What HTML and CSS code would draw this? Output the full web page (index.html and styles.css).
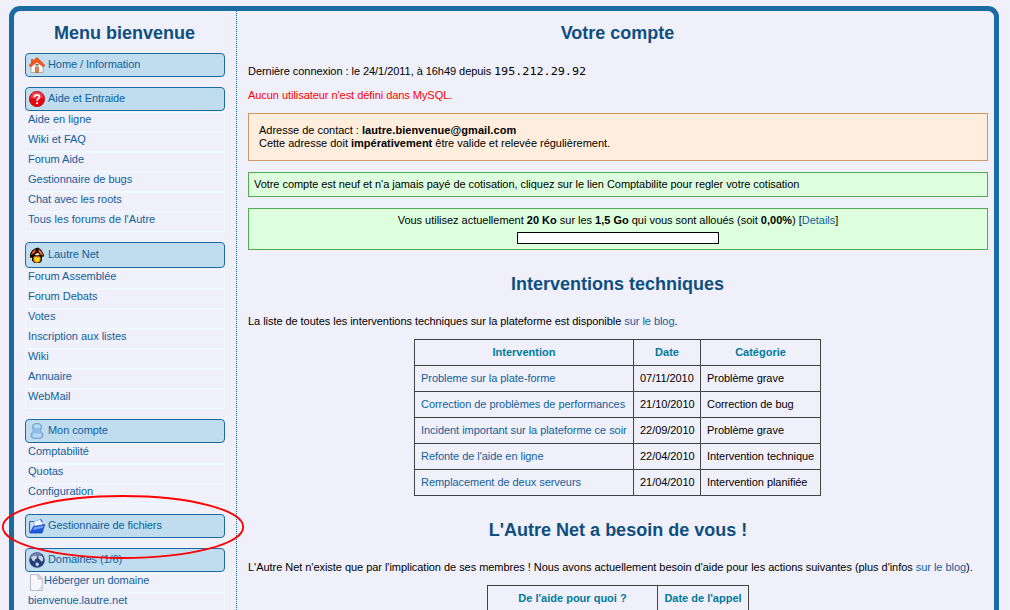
FILE: index.html
```html
<!DOCTYPE html>
<html lang="fr">
<head>
<meta charset="utf-8">
<title>Votre compte</title>
<link rel="stylesheet" href="styles.css">
</head>
<body>
<div class="frame">
  <nav class="menu">
    <h2>Menu bienvenue</h2>
    <section class="group">
      <a class="head"><svg class="icon" viewBox="0 0 16 16"><path d="M2 8v7.500h12V8L8 3z" fill="#faf6f4" stroke="#b39a8e" stroke-width=".8"/><path d="M2 2h2.500v4H2z" fill="#d06a3c"/><path d="M8 .2L0 8.200l1.500 1.900L8 5.200l6.500 4.900L16 8.200z" fill="#f0561a" stroke="#c8400f" stroke-width=".4"/><path d="M6.500 10h3v5.500h-3z" fill="#dd8a4a" stroke="#9a5a35" stroke-width=".6"/><path d="M6.500 7.300h3v1.200h-3z" fill="#444"/></svg>Home / Information</a>
    </section>
    <section class="group">
      <a class="head"><svg class="icon" viewBox="0 0 16 16"><circle cx="8" cy="8" r="7.700" fill="#e8060f" stroke="#a4000a" stroke-width=".6"/><path d="M1.500 6.500A6.600 6.600 0 0 1 14.500 6.500Q8 9 1.500 6.500" fill="#f4606a" opacity=".6"/><path d="M5.400 6.200Q5.500 3.900 8 3.900T10.500 6.100Q10.500 7.200 9 8.100Q8.100 8.700 8.100 9.900" fill="none" stroke="#fff" stroke-width="1.700"/><path d="M7.200 11.200H9V13H7.200z" fill="#fff"/></svg>Aide et Entraide</a>
      <ul><li>Aide en ligne</li><li>Wiki et FAQ</li><li>Forum Aide</li><li>Gestionnaire de bugs</li><li>Chat avec les roots</li><li class="wide">Tous les forums de l'Autre</li></ul>
    </section>
    <section class="group">
      <a class="head tall"><svg class="icon" viewBox="0 0 16 18"><path d="M6 2.500L9 1.500l3.500 2.500 2.500 5-.5 2-1.500-.5v4L11 17H5.500L3 14.500V11.500L1 12V8l2-3.500z" fill="#120a05"/><path d="M2 9L3.500 5.500 7 3 6 6.500 4 8z" fill="#ee5f1c"/><path d="M9.500 3l3 2.500 1.500 4-2.300-.5L9.500 6z" fill="#f4632a"/><path d="M7 7.200h2.500L11 9H5.500z" fill="#fff2e0"/><circle cx="8" cy="13" r="3.700" fill="#fb8a14"/><path d="M5 12l3-1 3 1.500-1.500 3H6.500z" fill="#ffdc22"/><path d="M8.500 2L6.500 8 3 10.500M9.500 6l2.500 4M3 10h9" fill="none" stroke="#120a05" stroke-width=".7"/></svg>Lautre Net</a>
      <ul><li>Forum Assemblée</li><li>Forum Debats</li><li>Votes</li><li>Inscription aux listes</li><li>Wiki</li><li>Annuaire</li><li>WebMail</li></ul>
    </section>
    <section class="group">
      <a class="head"><svg class="icon" viewBox="0 0 16 16"><path d="M8 .3C5 .3 3.300 1.900 3.300 4.200c0 1.500.7 2.500 1.700 3.300C3.200 8.600 2 10.500 2 13.200c0 1.700 2.500 2.500 6 2.500s6-.8 6-2.500c0-2.700-1.200-4.600-3-5.700 1-.8 1.700-1.800 1.700-3.300C12.700 1.900 11 .3 8 .3z" fill="#8fbfee" stroke="#7395b8" stroke-width=".8"/><ellipse cx="8" cy="3.200" rx="3" ry="1.700" fill="#c0defa"/><ellipse cx="8" cy="12.500" rx="4.500" ry="2" fill="#b4d7f8"/></svg>Mon compte</a>
      <ul><li>Comptabilité</li><li>Quotas</li><li>Configuration</li></ul>
    </section>
    <section class="group">
      <a class="head"><svg class="icon" viewBox="0 0 16 16"><path d="M.6 3.500h4l1 1.500h4v9.500H.6z" fill="#c6dcfb" stroke="#2c58c4"/><path d="M4.500 4L12 1l2.200 6-7.200 3z" fill="#f9fcff" stroke="#7b9ddd" stroke-width=".7"/><path d="M11 .5l3.200 2.700L12 4z" fill="#3e6fd5"/><path d="M1 15L4.500 8.500l11.200-2L13 15z" fill="#2058e4" stroke="#123eb4" stroke-width=".7"/><path d="M5.200 9.300l9.300-1.700-1 2.400L4 12z" fill="#75a5fa"/></svg>Gestionnaire de fichiers</a>
    </section>
    <section class="group">
      <a class="head"><svg class="icon" viewBox="0 0 16 16"><circle cx="8" cy="8" r="7.800" fill="#27407c"/><path d="M.8 6Q3 1 8 .6Q11 1 12.500 2.200Q8 6 .8 6.500z" fill="#6d80ae"/><path d="M2 5.500l3-2 2.500.5.500 2-2 1.500-.5 2-2-1zM9.500 4l3-.5 1.800 2.500-.5 3-1.500.5-1.500-2-1.500-1zM7 10.500l2.500.5.5 2-2 1.500-1.500-2z" fill="#ccd5e6"/></svg>Domaines (1/6)</a>
      <ul><li class="withicon"><svg class="page" viewBox="0 0 14 17"><path d="M.5.6h7.500L12.500 5v11.400H.5z" fill="#f7f7fb" stroke="#aaa9bd" stroke-width=".8"/><path d="M8 .6V5h4.500z" fill="#dedeea" stroke="#aaa9bd" stroke-width=".7"/><path d="M8.500 16l4-7v7z" fill="#dcdbe8"/></svg>Héberger un domaine</li><li>bienvenue.lautre.net</li></ul>
    </section>
  </nav>
  <main class="content">
    <h2>Votre compte</h2>
    <p class="login">Dernière connexion : le 24/1/2011, à 16h49 depuis <code>195.212.29.92</code></p>
    <p class="error">Aucun utilisateur n'est défini dans MySQL.</p>
    <div class="box contact">Adresse de contact : <b class="mail">lautre.bienvenue@gmail.com</b><br>Cette adresse doit <b>impérativement</b> être valide et relevée régulièrement.</div>
    <div class="box notice">Votre compte est neuf et n'a jamais payé de cotisation, cliquez sur le lien Comptabilite pour regler votre cotisation</div>
    <div class="box quota">Vous utilisez actuellement <b>20 Ko</b> sur les <b>1,5 Go</b> qui vous sont alloués (soit <b>0,00%</b>) [<a>Details</a>]<div class="gauge"></div></div>
    <h2 class="works">Interventions techniques</h2>
    <p class="intro">La liste de toutes les interventions techniques sur la plateforme est disponible <a>sur le blog</a>.</p>
    <table class="tasks">
      <colgroup><col class="c1"><col class="c2"><col class="c3"></colgroup>
      <tr><th>Intervention</th><th>Date</th><th>Catégorie</th></tr>
      <tr><td><a>Probleme sur la plate-forme</a></td><td>07/11/2010</td><td>Problème grave</td></tr>
      <tr><td><a>Correction de problèmes de performances</a></td><td>21/10/2010</td><td>Correction de bug</td></tr>
      <tr><td><a>Incident important sur la plateforme ce soir</a></td><td>22/09/2010</td><td>Problème grave</td></tr>
      <tr><td><a>Refonte de l'aide en ligne</a></td><td>22/04/2010</td><td>Intervention technique</td></tr>
      <tr><td><a>Remplacement de deux serveurs</a></td><td>21/04/2010</td><td>Intervention planifiée</td></tr>
    </table>
    <h2 class="help">L'Autre Net a besoin de vous !</h2>
    <p class="intro members">L'Autre Net n'existe que par l'implication de ses membres ! Nous avons actuellement besoin d'aide pour les actions suivantes (plus d'infos <a>sur le blog</a>).</p>
    <table class="calls">
      <colgroup><col class="d1"><col class="d2"></colgroup>
      <tr><th>De l'aide pour quoi ?</th><th>Date de l'appel</th></tr>
      <tr><td></td><td></td></tr>
    </table>
  </main>
</div>
<svg class="marker" viewBox="0 0 246 68"><ellipse cx="123" cy="34" rx="120.200" ry="31"/></svg>
</body>
</html>
```
FILE: styles.css
```css
* { box-sizing: border-box; }
html, body { height: 610px; overflow: hidden; }
body {
  margin: 0;
  padding: 6px 11px 0 9px;
  background: #f0f0fa;
  color: #000;
  font: 11px/13px "Liberation Sans", Arial, sans-serif;
}
.frame {
  display: flex;
  height: 604px;
  overflow: hidden;
  border: 5px solid #1c6ba0;
  border-bottom: 0;
  border-radius: 11px 11px 0 0;
}
.menu {
  flex: 0 0 223px;
  padding: 11px 11px 0;
  border-right: 1px dotted #1c6ba0;
}
h2 {
  margin: 0;
  font-size: 18px;
  line-height: 22px;
  letter-spacing: 0;
  text-align: center;
  color: #0f4f80;
}
.menu h2 { margin: 0 1px 9px 0; }
.group { margin-bottom: 10px; color: #10609a; }
.head {
  display: flex;
  height: 24px;
  padding: 3px 3px 0;
  border: 1px solid #1c6ba0;
  border-radius: 4px;
  background: #c0ddf0;
  line-height: 14px;
  letter-spacing: -.07px;
}
.head.tall { height: 26px; line-height: 17px; }
.icon { width: 16px; height: 16px; margin-right: 3px; flex: none; }
.tall .icon { height: 18px; }
ul { list-style: none; margin: 1px 0 0; padding: 0; letter-spacing: -.02px; }
.wide { letter-spacing: .04px; }
li {
  height: 20px;
  padding: 0 2px;
  border: 1px solid #f0f8ff;
}
.withicon { display: flex; letter-spacing: -.06px; }
.page { width: 14px; height: 17px; margin-left: 2px; flex: none; }
.content { flex: 1; padding: 11px 6px 0 11px; letter-spacing: -.05px; }
.content h2 { margin-right: 1px; }
p { margin: 0; }
a { color: #10609a; }
b { letter-spacing: 0; }
.mail { letter-spacing: .07px; }
.login { margin-top: 21px; }
code {
  display: inline-block;
  font: 11px/13px "DejaVu Sans Mono", monospace;
  letter-spacing: 0;
  transform: scaleX(1.07);
  transform-origin: left;
}
.error { margin-top: 11px; color: #f00; }
.box { border: 1px solid #55a955; background: #dfd; }
.contact {
  height: 48px;
  margin-top: 11px;
  padding: 10px;
  border-color: #cc9966;
  background: #ffeedd;
  letter-spacing: -.02px;
}
.notice { height: 25px; margin-top: 11px; padding: 5px; }
.quota {
  height: 42px;
  margin-top: 11px;
  padding-top: 5px;
  text-align: center;
  letter-spacing: -.02px;
}
.gauge {
  width: 202px;
  height: 12px;
  margin: 5px auto 0;
  border: 1px solid #000;
  background: #fff;
}
.works { margin-top: 23px; }
.intro { margin-top: 20px; }
.members { letter-spacing: -.04px; }
table {
  margin: 11px auto 0;
  border-collapse: collapse;
  table-layout: fixed;
}
th, td {
  height: 26px;
  padding: 0 6px;
  border: 1px solid #444;
  text-align: left;
  white-space: nowrap;
}
th { text-align: center; color: #007a9c; letter-spacing: 0; }
.tasks { width: 407px; margin-left: 166px; }
.c1 { width: 219px; }
.c2 { width: 67px; }
.c3 { width: 120px; }
.content .help { margin: 23px 0 0; }
.calls { width: 262px; }
.d1 { width: 170px; }
.d2 { width: 91px; }
.marker {
  position: absolute;
  left: 0;
  top: 493px;
  width: 246px;
  height: 68px;
  fill: none;
  stroke: #f00;
  stroke-width: 1.800;
}
```
